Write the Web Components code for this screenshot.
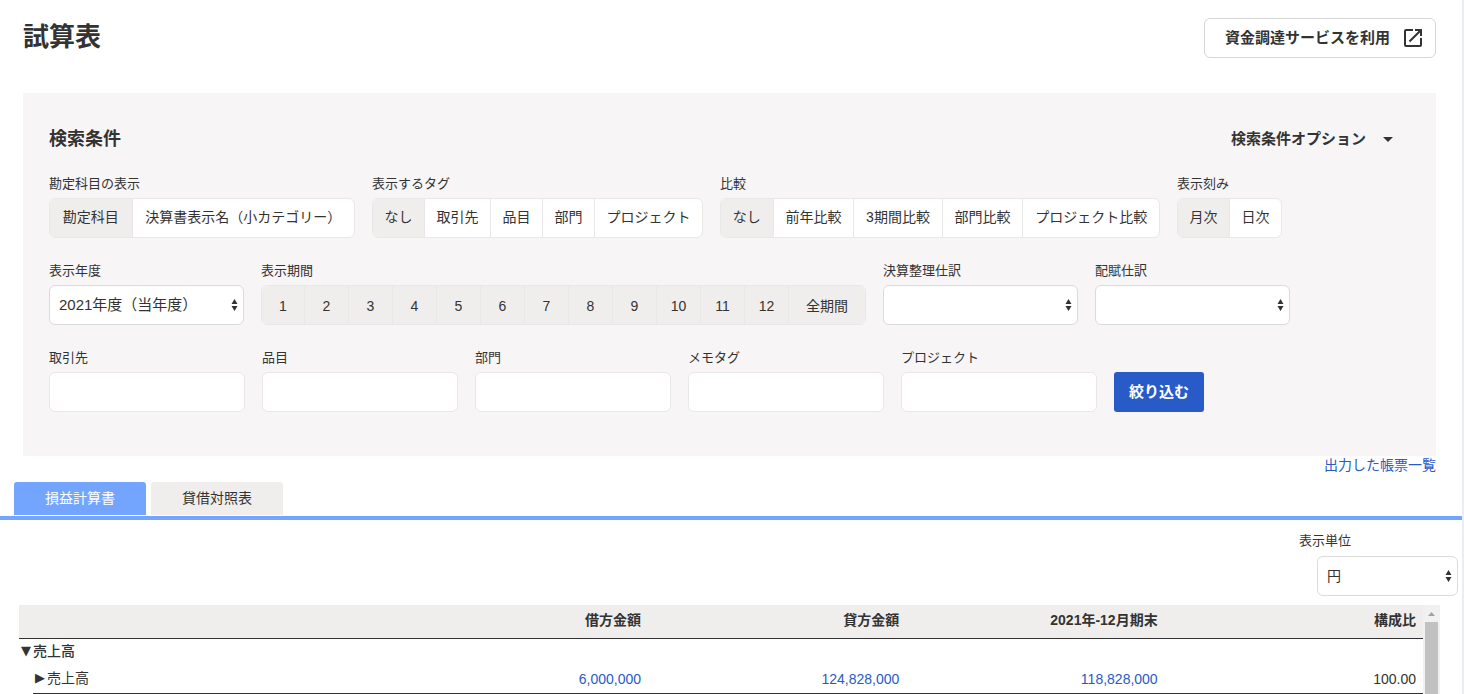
<!DOCTYPE html>
<html lang="ja">
<head>
<meta charset="utf-8">
<title>試算表</title>
<style>
body {
    margin: 0;
    color: #333;
    background-color: #fff;
    font-family: "Liberation Sans", "Noto Sans CJK JP", sans-serif;
    font-size: 14px;
    line-height: 20px;
}
</style>
</head>
<body>
<trial-balance-page></trial-balance-page>

<script>
function attach(element, html) {
    const shadowRoot = element.attachShadow({ mode: 'open' });
    const template = document.createElement('template');
    template.innerHTML = html;
    shadowRoot.appendChild(template.content.cloneNode(true));
    return shadowRoot;
}

// title and the link to the funding service
class PageHeader extends HTMLElement {
    connectedCallback() {
        attach(this, `
<style>
:host {
    display: flex;
    justify-content: space-between;
    align-items: flex-start;
    padding: 18px 26px 35px 23px;
}

h1 {
    margin: 0;
    font-size: 26px;
    line-height: 38px;
}

a {
    display: flex;
    align-items: center;
    gap: 11px;
    box-sizing: border-box;
    height: 40px;
    padding: 0 10px 0 20px;
    border: 1px solid #d7d6d6;
    border-radius: 6px;
    color: inherit;
    font-size: 15px;
    font-weight: bold;
    text-decoration: none;
}
</style>

<h1><slot></slot></h1>
<a href="#funding">
    資金調達サービスを利用
    <svg width="24" height="24" viewBox="0 0 24 24" fill="#333" aria-hidden="true">
        <path d="M19 19H5V5h7V3H5a2 2 0 0 0-2 2v14a2 2 0 0 0 2 2h14c1.100 0 2-.9 2-2v-7h-2v7zM14 3v2h3.590l-9.830 9.830 1.410 1.410L19 6.410V10h2V3h-7z"/>
    </svg>
</a>
`);
    }
}

customElements.define('page-header', PageHeader);

// row of joined choices: one is picked, or several with "multiple"
class SegmentField extends HTMLElement {
    connectedCallback() {
        const type = this.hasAttribute('multiple') ? 'checkbox' : 'radio';
        const role = type === 'radio' ? 'radiogroup' : 'group';
        const items = this.getAttribute('items').split(',').map((item, i) => `
    <label><input type="${type}" name="choice" ${type === 'checkbox' || i === 0 ? 'checked' : ''}><span>${item}</span></label>`).join('');
        attach(this, `
<style>
:host {
    display: block;
}

.caption {
    margin-bottom: 4px;
    font-size: 13px;
}

.group {
    display: flex;
    box-sizing: border-box;
    height: 40px;
    border: 1px solid #e9e7e7;
    border-radius: 6px;
    background-color: #fff;
    overflow: hidden;
}

label {
    position: relative;
    display: flex;
    flex: 1 0 auto;
    box-sizing: border-box;
    cursor: pointer;
}

label + label {
    border-left: 1px solid #e9e7e7;
}

input {
    position: absolute;
    opacity: 0;
}

span {
    flex: 1;
    padding: 0 11px;
    line-height: 36px;
    text-align: center;
    white-space: nowrap;
}

input:checked + span {
    background-color: #f0eeed;
}

:host([multiple]) label {
    flex: 0 0 44px;
}

:host([multiple]) label:first-child {
    flex-basis: 42px;
}

:host([multiple]) label:last-child {
    flex: 1 0 auto;
}

:host([multiple]) span {
    line-height: 40px;
}
</style>

<div class="caption" id="caption"><slot></slot></div>
<div class="group" role="${role}" aria-labelledby="caption">${items}
</div>
`);
    }
}

customElements.define('segment-field', SegmentField);

class SelectField extends HTMLElement {
    connectedCallback() {
        attach(this, `
<style>
:host {
    display: block;
}

label {
    display: block;
    margin-bottom: 4px;
    font-size: 13px;
}

.box {
    position: relative;
}

select {
    display: block;
    appearance: none;
    box-sizing: border-box;
    width: 100%;
    height: 40px;
    padding: 0 24px 1px 9px;
    border: 1px solid #dcdbdb;
    border-radius: 6px;
    background-color: #fff;
    color: inherit;
    font-family: inherit;
    font-size: var(--select-size, 15px);
}

svg {
    position: absolute;
    top: 14px;
    right: 6px;
    pointer-events: none;
}
</style>

<label for="control"><slot></slot></label>
<div class="box">
    <select id="control"><option>${this.getAttribute('value') || ''}</option></select>
    <svg width="7" height="12" viewBox="0 0 7 12" fill="#333" aria-hidden="true">
        <path d="M3.500 0L6.500 5H.5zM.5 7h6l-3 5z"/>
    </svg>
</div>
`);
    }
}

customElements.define('select-field', SelectField);

class TextField extends HTMLElement {
    connectedCallback() {
        attach(this, `
<style>
:host {
    display: block;
}

label {
    display: block;
    margin-bottom: 4px;
    font-size: 13px;
}

input {
    display: block;
    box-sizing: border-box;
    width: 100%;
    height: 40px;
    padding: 0 9px;
    border: 1px solid #e9e7e7;
    border-radius: 6px;
    background-color: #fff;
    color: inherit;
    font-family: inherit;
    font-size: 14px;
}
</style>

<label for="control"><slot></slot></label>
<input id="control" type="text">
`);
    }
}

customElements.define('text-field', TextField);

class SearchPanel extends HTMLElement {
    connectedCallback() {
        attach(this, `
<style>
:host {
    display: block;
    margin: 0 26px 0 23px;
    padding: 34px 26px 44px;
    background-color: #f7f5f6;
}

.head {
    display: flex;
    justify-content: space-between;
    align-items: center;
    margin-bottom: 23px;
    padding-right: 17px;
}

h2 {
    margin: 0;
    font-size: 18px;
    line-height: 24px;
}

.option {
    display: flex;
    align-items: center;
    gap: 17px;
    padding: 0;
    border: 0;
    background: none;
    color: inherit;
    font-family: inherit;
    font-size: 15px;
    font-weight: bold;
    line-height: 24px;
}

.row {
    display: flex;
    align-items: flex-end;
    gap: 17px;
}

.row + .row {
    margin-top: 23px;
}

.subject {
    width: 306px;
}

.tag {
    width: 331px;
}

.compare {
    width: 440px;
}

.step {
    width: 105px;
}

.period {
    width: 605px;
}

select-field {
    width: 195px;
}

text-field {
    width: 196px;
}

.submit {
    height: 40px;
    padding: 0 15px 3px;
    border: 0;
    border-radius: 3px;
    background-color: #285ac8;
    color: #fff;
    font-family: inherit;
    font-size: 15px;
    font-weight: bold;
}
</style>

<div class="head">
    <h2>検索条件</h2>
    <button class="option" type="button">
        検索条件オプション
        <svg width="10" height="5" viewBox="0 0 10 5" fill="#333" aria-hidden="true"><path d="M0 0h10L5 5z"/></svg>
    </button>
</div>
<div class="row">
    <segment-field class="subject" items="勘定科目,決算書表示名（小カテゴリー）">勘定科目の表示</segment-field>
    <segment-field class="tag" items="なし,取引先,品目,部門,プロジェクト">表示するタグ</segment-field>
    <segment-field class="compare" items="なし,前年比較,3期間比較,部門比較,プロジェクト比較">比較</segment-field>
    <segment-field class="step" items="月次,日次">表示刻み</segment-field>
</div>
<div class="row">
    <select-field value="2021年度（当年度）">表示年度</select-field>
    <segment-field class="period" multiple items="1,2,3,4,5,6,7,8,9,10,11,12,全期間">表示期間</segment-field>
    <select-field>決算整理仕訳</select-field>
    <select-field>配賦仕訳</select-field>
</div>
<div class="row">
    <text-field>取引先</text-field>
    <text-field>品目</text-field>
    <text-field>部門</text-field>
    <text-field>メモタグ</text-field>
    <text-field>プロジェクト</text-field>
    <button class="submit" type="button">絞り込む</button>
</div>
`);
    }
}

customElements.define('search-panel', SearchPanel);

class ReportTabs extends HTMLElement {
    connectedCallback() {
        attach(this, `
<style>
:host {
    display: flex;
    gap: 5px;
    padding: 0 14px 1px;
    border-bottom: 4px solid #73a5ff;
}

button {
    height: 33px;
    padding: 0 30px 3px;
    min-width: 132px;
    border: 0;
    border-radius: 3px 3px 0 0;
    background-color: #f0eeed;
    color: inherit;
    font-family: inherit;
    font-size: 14px;
}

button[aria-selected="true"] {
    background-color: #73a5ff;
    color: #fff;
}
</style>

<button type="button" role="tab" aria-selected="true">損益計算書</button>
<button type="button" role="tab" aria-selected="false">貸借対照表</button>
`);
        this.setAttribute('role', 'tablist');
    }
}

customElements.define('report-tabs', ReportTabs);

class BalanceTable extends HTMLElement {
    connectedCallback() {
        attach(this, `
<style>
:host {
    display: flex;
    overflow: hidden;
}

.sheet {
    flex: 1;
}

table {
    width: 100%;
    border-collapse: separate;
    border-spacing: 0;
    table-layout: fixed;
}

.indent {
    width: 14px;
}

.amount {
    width: 18.4%;
}

th,
td {
    padding: 0 7px 2px 0;
    text-align: right;
}

thead th {
    box-sizing: border-box;
    height: 34px;
    padding-bottom: 4px;
    border-bottom: 1px solid #333;
    background-color: #f0eeed;
}

tbody tr {
    height: 26px;
}

tbody th {
    padding-left: 2px;
    text-align: left;
    font-weight: normal;
}

.total th {
    font-weight: 500;
}

.detail {
    height: 29px;
}

.detail th,
.detail .value {
    border-bottom: 1px solid #333;
}

.detail .value {
    padding-top: 1px;
}

button {
    display: flex;
    gap: 2px;
    padding: 0;
    border: 0;
    background: none;
    color: inherit;
    font: inherit;
}

.mark {
    font-family: "DejaVu Sans", sans-serif;
    font-size: 13px;
}

a {
    color: #285ac8;
    text-decoration: none;
}

.scrollbar {
    display: flex;
    flex-direction: column;
    align-items: center;
    flex: 0 0 17px;
    background-color: #f1f1f1;
}

.scrollbar svg {
    flex: none;
}

.thumb {
    flex: 1;
    width: 13px;
    background-color: #c1c1c1;
}
</style>

<div class="sheet">
    <table>
        <colgroup>
            <col class="indent"><col><col class="amount"><col class="amount"><col class="amount"><col class="amount">
        </colgroup>
        <thead>
            <tr><th colspan="2"></th><th>借方金額</th><th>貸方金額</th><th>2021年-12月期末</th><th>構成比</th></tr>
        </thead>
        <tbody>
            <tr class="total">
                <th colspan="2"><button type="button"><span class="mark">▼</span>売上高</button></th>
                <td></td><td></td><td></td><td></td>
            </tr>
            <tr class="detail">
                <td></td>
                <th><button type="button"><span class="mark">▶</span>売上高</button></th>
                <td class="value"><a href="#debit">6,000,000</a></td>
                <td class="value"><a href="#credit">124,828,000</a></td>
                <td class="value"><a href="#balance">118,828,000</a></td>
                <td class="value">100.00</td>
            </tr>
        </tbody>
    </table>
</div>
<div class="scrollbar" aria-hidden="true">
    <svg width="17" height="17" viewBox="0 0 17 17" fill="#a3a3a3"><path d="M5 11h7L8.500 7z"/></svg>
    <div class="thumb"></div>
</div>
`);
    }
}

customElements.define('balance-table', BalanceTable);

class TrialBalancePage extends HTMLElement {
    connectedCallback() {
        attach(this, `
<style>
:host {
    display: flex;
    flex-direction: column;
    box-sizing: border-box;
    height: 100vh;
    border-right: 2px solid #e9eef3;
    overflow: hidden;
}

.exports {
    align-self: flex-end;
    margin: 0 26px 8px 0;
    color: #285ac8;
    line-height: 18px;
    text-decoration: none;
}

.unit {
    align-self: flex-end;
    margin: 11px 4px 9px 0;
    width: 141px;
    --select-size: 14px;
}

.unit span {
    display: block;
    margin-left: -18px;
    padding-bottom: 1px;
}

balance-table {
    flex: 1;
    min-height: 0;
    margin: 0 22px 0 19px;
}
</style>

<page-header>試算表</page-header>
<search-panel></search-panel>
<a class="exports" href="#exports">出力した帳票一覧</a>
<report-tabs></report-tabs>
<select-field class="unit" value="円"><span>表示単位</span></select-field>
<balance-table></balance-table>
`);
    }
}

customElements.define('trial-balance-page', TrialBalancePage);
</script>
</body>
</html>
